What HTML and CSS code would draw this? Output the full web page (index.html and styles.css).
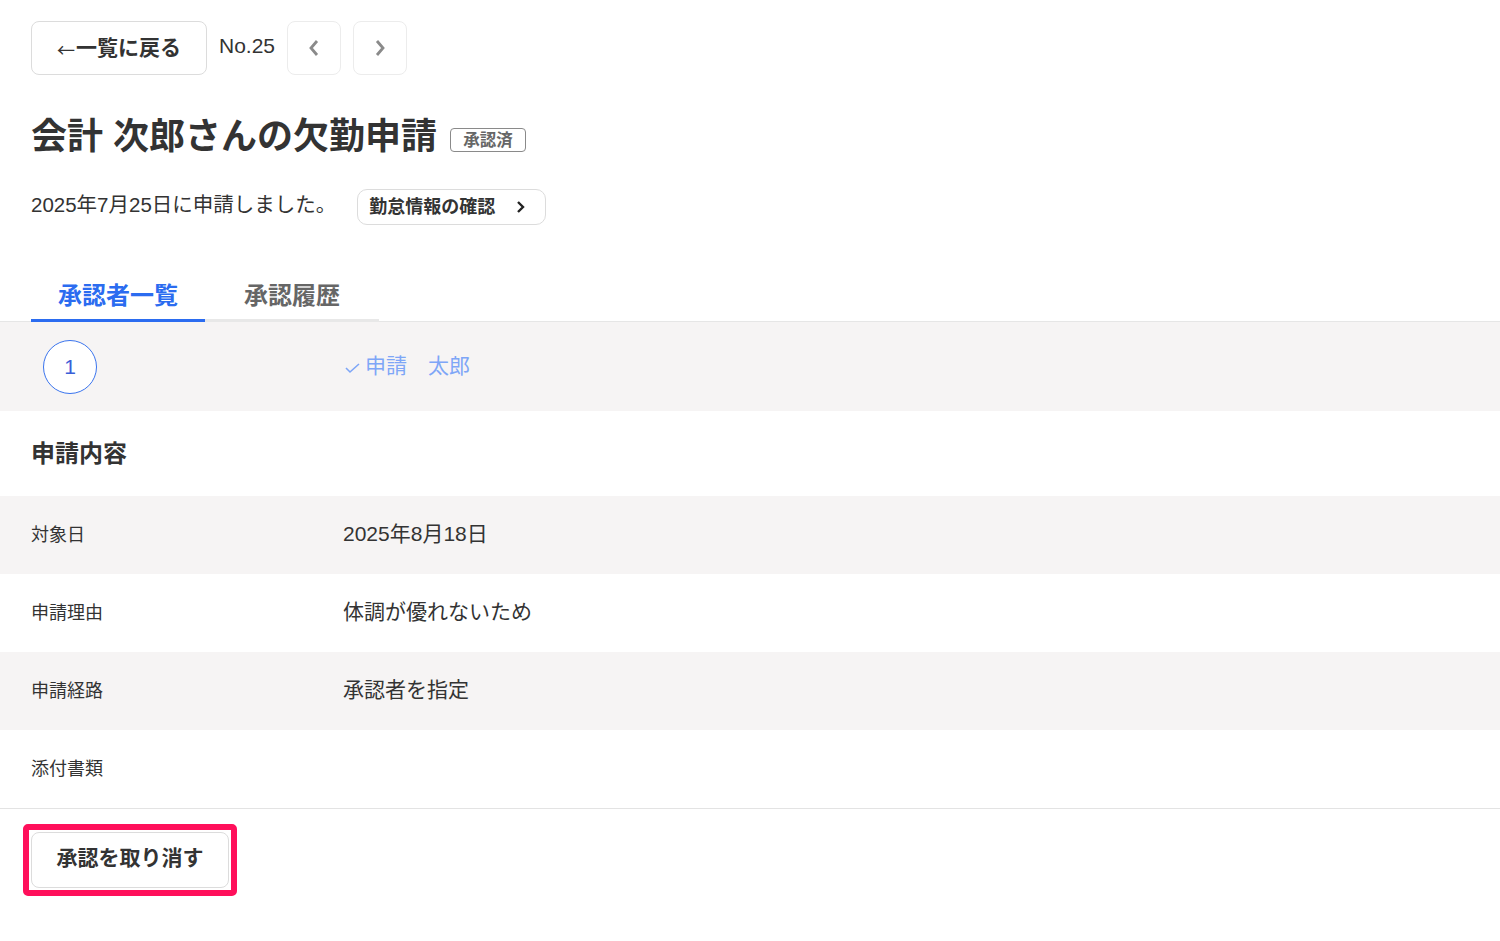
FILE: index.html
```html
<!DOCTYPE html>
<html lang="ja">
<head>
<meta charset="UTF-8">
<title>欠勤申請</title>
<link rel="stylesheet" href="styles.css">
</head>
<body>

<div class="topbar">
  <a class="back-btn" href="#"><span class="arrow">←</span>一覧に戻る</a>
  <span class="req-no">No.25</span>
  <a class="nav-btn" href="#">
    <svg width="14" height="20" viewBox="0 0 14 20"><polyline points="10,3 4,10 10,17" fill="none" stroke="#8a8a8a" stroke-width="2.8"/></svg>
  </a>
  <a class="nav-btn" href="#">
    <svg width="14" height="20" viewBox="0 0 14 20"><polyline points="4,3 10,10 4,17" fill="none" stroke="#8a8a8a" stroke-width="2.8"/></svg>
  </a>
</div>

<div class="title-row">
  <h1 class="title">会計 次郎さんの欠勤申請</h1>
  <span class="badge">承認済</span>
</div>

<div class="sub-row">
  <span class="applied">2025年7月25日に申請しました。</span>
  <a class="link-btn" href="#"><span>勤怠情報の確認</span>
    <svg width="12" height="16" viewBox="0 0 12 16"><polyline points="3,3 8,8 3,13" fill="none" stroke="#222" stroke-width="2.4"/></svg>
  </a>
</div>

<div class="tabs">
  <div class="tab active">承認者一覧</div>
  <div class="tab">承認履歴</div>
</div>

<div class="approvers">
  <div class="step-col"><span class="step">1</span></div>
  <div class="approver">
    <svg width="16" height="12" viewBox="0 0 16 12"><polyline points="1,6 5,10 14,2" fill="none" stroke="#7ea6f7" stroke-width="1.6"/></svg>
    <span>申請　太郎</span>
  </div>
</div>

<div class="section-head">申請内容</div>

<div class="detail">
  <div class="row shade"><div class="label">対象日</div><div class="value">2025年8月18日</div></div>
  <div class="row"><div class="label">申請理由</div><div class="value">体調が優れないため</div></div>
  <div class="row shade"><div class="label">申請経路</div><div class="value">承認者を指定</div></div>
  <div class="row"><div class="label">添付書類</div><div class="value"></div></div>
</div>

<div class="actions">
  <div class="highlight">
    <button class="cancel-btn">承認を取り消す</button>
  </div>
</div>

</body>
</html>
```

FILE: styles.css
```css
html, body{
  margin:0;
  padding:0;
  background:#fff;
  color:#333;
  font-family:"Liberation Sans", "Noto Sans CJK JP", sans-serif;
  font-size:21px;
}

a{
  color:inherit;
  text-decoration:none;
}

.topbar{
  display:flex;
  align-items:center;
  gap:12px;
  padding:21px 31px 0;
}

.back-btn{
  box-sizing:border-box;
  width:176px;
  height:54px;
  border:1px solid #dcdcdc;
  border-radius:8px;
  display:flex;
  align-items:center;
  justify-content:center;
  font-weight:bold;
  font-size:21px;
  padding-bottom:4px;
}

.arrow{
  font-family:"Noto Sans CJK JP", sans-serif;
  font-weight:normal;
  font-size:18px;
  margin-top:5px;
  margin-right:1px;
}

.req-no{
  font-size:21px;
  margin-top:-4px;
}

.nav-btn{
  box-sizing:border-box;
  width:54px;
  height:54px;
  border:1px solid #ececec;
  border-radius:8px;
  display:flex;
  align-items:center;
  justify-content:center;
}

.title-row{
  display:flex;
  align-items:center;
  padding:0 31px;
  margin-top:40px;
}

.title{
  margin:0;
  font-size:36px;
  line-height:43px;
  font-weight:bold;
}

.badge{
  box-sizing:border-box;
  margin-left:13px;
  margin-top:7px;
  width:76px;
  height:24px;
  border:1.5px solid #8a8a8a;
  border-radius:4px;
  color:#666;
  font-size:16.5px;
  font-weight:bold;
  display:flex;
  align-items:center;
  justify-content:center;
  padding-bottom:3px;
}

.sub-row{
  display:flex;
  align-items:center;
  padding:0 31px;
  margin-top:31px;
  height:36px;
}

.applied{
  font-size:20.5px;
  margin-top:-8px;
}

.link-btn{
  box-sizing:border-box;
  margin-left:21px;
  width:189px;
  height:36px;
  border:1px solid #dcdcdc;
  border-radius:10px;
  display:flex;
  align-items:center;
  justify-content:space-between;
  padding:0 18px 0 11px;
  font-size:18px;
  font-weight:bold;
}

.link-btn span{
  margin-top:-4px;
}

.tabs{
  display:flex;
  padding:0 31px;
  margin-top:53px;
  border-bottom:1px solid #e6e6e6;
}

.tab{
  width:174px;
  text-align:center;
  font-size:24px;
  line-height:36px;
  font-weight:bold;
  color:#666;
  padding-bottom:5px;
  border-bottom:3px solid #e8e8e8;
  margin-bottom:-1px;
}

.tab.active{
  color:#2b6cf0;
  border-bottom-color:#2b6cf0;
}

.approvers{
  display:grid;
  grid-template-columns:312px 1fr;
  align-items:center;
  height:89px;
  padding-left:31px;
  background:#f6f4f4;
}

.step-col{
  padding-left:12px;
}

.step{
  box-sizing:border-box;
  width:54px;
  height:54px;
  border:1.5px solid #3a74ee;
  border-radius:50%;
  background:#fff;
  color:#3a5fd8;
  display:flex;
  align-items:center;
  justify-content:center;
  font-size:21px;
}

.approver{
  display:flex;
  align-items:center;
  gap:4px;
  color:#7ea6f7;
  font-size:21px;
  padding-left:2px;
  margin-top:-6px;
}

.approver svg{
  margin-top:8px;
}

.section-head{
  height:85px;
  display:flex;
  align-items:center;
  padding-left:31px;
  font-size:24px;
  font-weight:bold;
  padding-bottom:4px;
  box-sizing:border-box;
}

.detail{
  border-bottom:1px solid #e3e3e3;
}

.row{
  display:grid;
  grid-template-columns:312px 1fr;
  align-items:center;
  height:78px;
  padding-left:31px;
}

.row.shade{
  background:#f6f4f4;
}

.label{
  font-size:18px;
  margin-top:-4px;
}

.value{
  font-size:21px;
  margin-top:-6px;
}

.actions{
  padding:15px 23px;
}

.highlight{
  display:inline-block;
  border:6px solid #ff0f5b;
  border-radius:5px;
  padding:2px;
}

.cancel-btn{
  display:block;
  box-sizing:border-box;
  width:198px;
  height:56px;
  border:1px solid #dcdcdc;
  border-radius:8px;
  background:#fff;
  color:#333;
  font-family:inherit;
  font-size:21px;
  font-weight:bold;
  padding:0 0 8px;
}
```
